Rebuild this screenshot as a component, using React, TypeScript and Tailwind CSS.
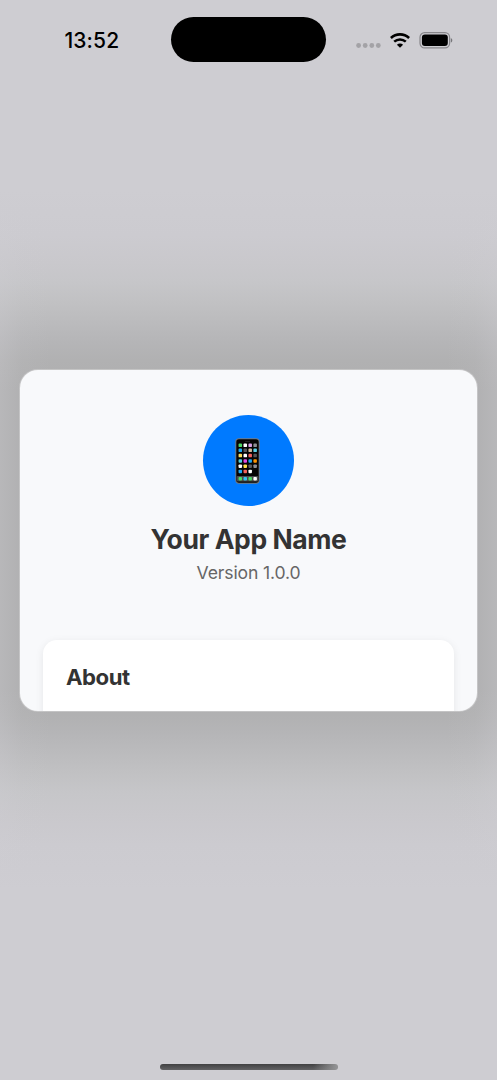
const appRows: string[][] = [
  ["#4cd964", "#ffffff", "#d9a0ea", "#8e8e93"],
  ["#1da9f5", "#555558", "#d6bd9c", "#5bd3ea"],
  ["#ffdf5a", "#ffffff", "#f4615c", "#555558"],
  ["#4fd0e0", "#e04be0", "#1da9f5", "#ff9500"],
  ["#ffffff", "#ffdf4a", "#5d5d60", "#8e8e93"],
  ["#1da9f5", "#f4615c", "#ffffff"],
];
const dock = ["#4cd964", "#35c3ee", "#4cd964", "#ffffff"];
const rowY = [7.3, 12.3, 17.6, 22.9, 28.2, 33.4];

function PhoneGlyph() {
  return (
    <svg viewBox="0 0 25 46" className="h-[46px] w-[25px]">
      <rect x="0.3" y="0.3" width="24.4" height="45.4" rx="3.6" fill="#77797d" />
      <rect x="1.3" y="1.3" width="22.4" height="43.4" rx="2.7" fill="#050505" />
      <rect x="10" y="2.9" width="5" height="0.9" rx="0.4" fill="#29292b" />
      <rect x="1.6" y="38" width="21.8" height="5.4" rx="1" fill="#4b4b4d" />
      {appRows.map((row, r) =>
        row.map((c, i) => (
          <rect key={`${r}-${i}`} x={3.55 + i * 4.95} y={rowY[r] - 1.75} width="3.5" height="3.5" rx="0.9" fill={c} />
        )),
      )}
      {dock.map((c, i) => (
        <rect key={i} x={3.55 + i * 4.95} y="39" width="3.5" height="3.5" rx="0.9" fill={c} />
      ))}
    </svg>
  );
}

function StatusBar() {
  return (
    <header className="flex h-[46px] items-center">
      <div className="w-[171px] pl-[64.5px] text-[21px] leading-none font-medium tracking-[0.1px] text-black">
        13:52
      </div>
      <div className="h-[45px] w-[155px] self-start rounded-full bg-black" />
      <div className="flex items-center pl-[30px]">
        <svg viewBox="0 0 26 16" className="h-4 w-[26px]" fill="#a3a2a6">
          <circle cx="2.6" cy="13.5" r="2.4" />
          <circle cx="9.2" cy="13.5" r="2.4" />
          <circle cx="15.8" cy="13.5" r="2.4" />
          <circle cx="22.3" cy="13.5" r="2.4" />
        </svg>
        <svg viewBox="0 0 20 15" className="ml-[8px] h-[15px] w-[20px]" fill="none" stroke="#000">
          <path d="M0.9 5C6.1 0.2 13.9 0.2 19.1 5" strokeWidth="2.6" />
          <path d="M4.2 8.7C7.6 5.6 12.4 5.6 15.8 8.7" strokeWidth="2.5" />
          <path d="M10 14.8L6.9 11.7C8.7 10.1 11.3 10.1 13.1 11.7Z" fill="#000" stroke="none" />
        </svg>
        <svg viewBox="0 0 34 17" className="ml-[9px] h-[17px] w-[34px]">
          <rect x="1" y="0.7" width="29.6" height="15.2" rx="4.6" fill="none" stroke="#87868a" strokeWidth="1.2" />
          <rect x="2.9" y="2.6" width="25.9" height="11.3" rx="3" fill="#000" />
          <path d="M31.8 6C33.8 6.8 33.8 9.8 31.8 10.6Z" fill="#77767a" />
        </svg>
      </div>
    </header>
  );
}

export default function App() {
  return (
    <div className="flex h-[1080px] w-[497px] flex-col overflow-hidden bg-[#cecdd2] bg-[linear-gradient(90deg,rgba(206,205,210,0.3)_0,rgba(206,205,210,0.08)_22px,transparent_50px,transparent_447px,rgba(206,205,210,0.08)_475px,rgba(206,205,210,0.3)_497px),linear-gradient(180deg,#cecdd2_190px,#cccbd0_235px,#c9c8cc_263px,#c6c6c9_282px,#c1c1c3_302px,#bbbbbd_322px,#b5b5b7_342px,#b1b1b2_360px,#aeaeaf_390px,#aeaeaf_690px,#b1b1b2_715px,#b5b5b7_733px,#bbbbbd_753px,#c1c1c3_773px,#c6c6c9_793px,#c9c8cc_815px,#cccbd0_845px,#cecdd2_890px)] pt-[17px] font-['Inter','Liberation_Sans',sans-serif]">
      <StatusBar />
      <main className="mx-[20px] mt-[307px] h-[341px] overflow-hidden rounded-[18px] bg-[#f8f9fb] shadow-[0_0_0_1px_rgba(255,255,255,0.25)]">
        <section className="flex flex-col items-center pt-[45px]">
          <div className="flex h-[91px] w-[91px] items-center justify-center rounded-full bg-[#007aff] pr-[2px]">
            <PhoneGlyph />
          </div>
          <h1 className="mt-[16px] text-[26.5px] leading-[34px] font-bold tracking-[-0.42px] text-[#333333]">Your App Name</h1>
          <p className="mt-[6px] text-[17.6px] leading-[22px] tracking-[-0.15px] text-[#666666]">Version 1.0.0</p>
        </section>
        <section className="mx-[23px] mt-[56px] h-[120px] rounded-[14px] bg-white px-[23px] pt-[22px] shadow-[0_2px_9px_rgba(0,0,0,0.08)]">
          <h2 className="text-[22.2px] leading-[30px] font-bold tracking-[-0.5px] text-[#333333]">About</h2>
        </section>
      </main>
      <footer className="mt-auto flex justify-center pb-[10px]">
        <div className="h-[6px] w-[178px] rounded-full bg-[linear-gradient(90deg,transparent_86%,#919193_99%),linear-gradient(180deg,#414142,#626264)]" />
      </footer>
    </div>
  );
}
